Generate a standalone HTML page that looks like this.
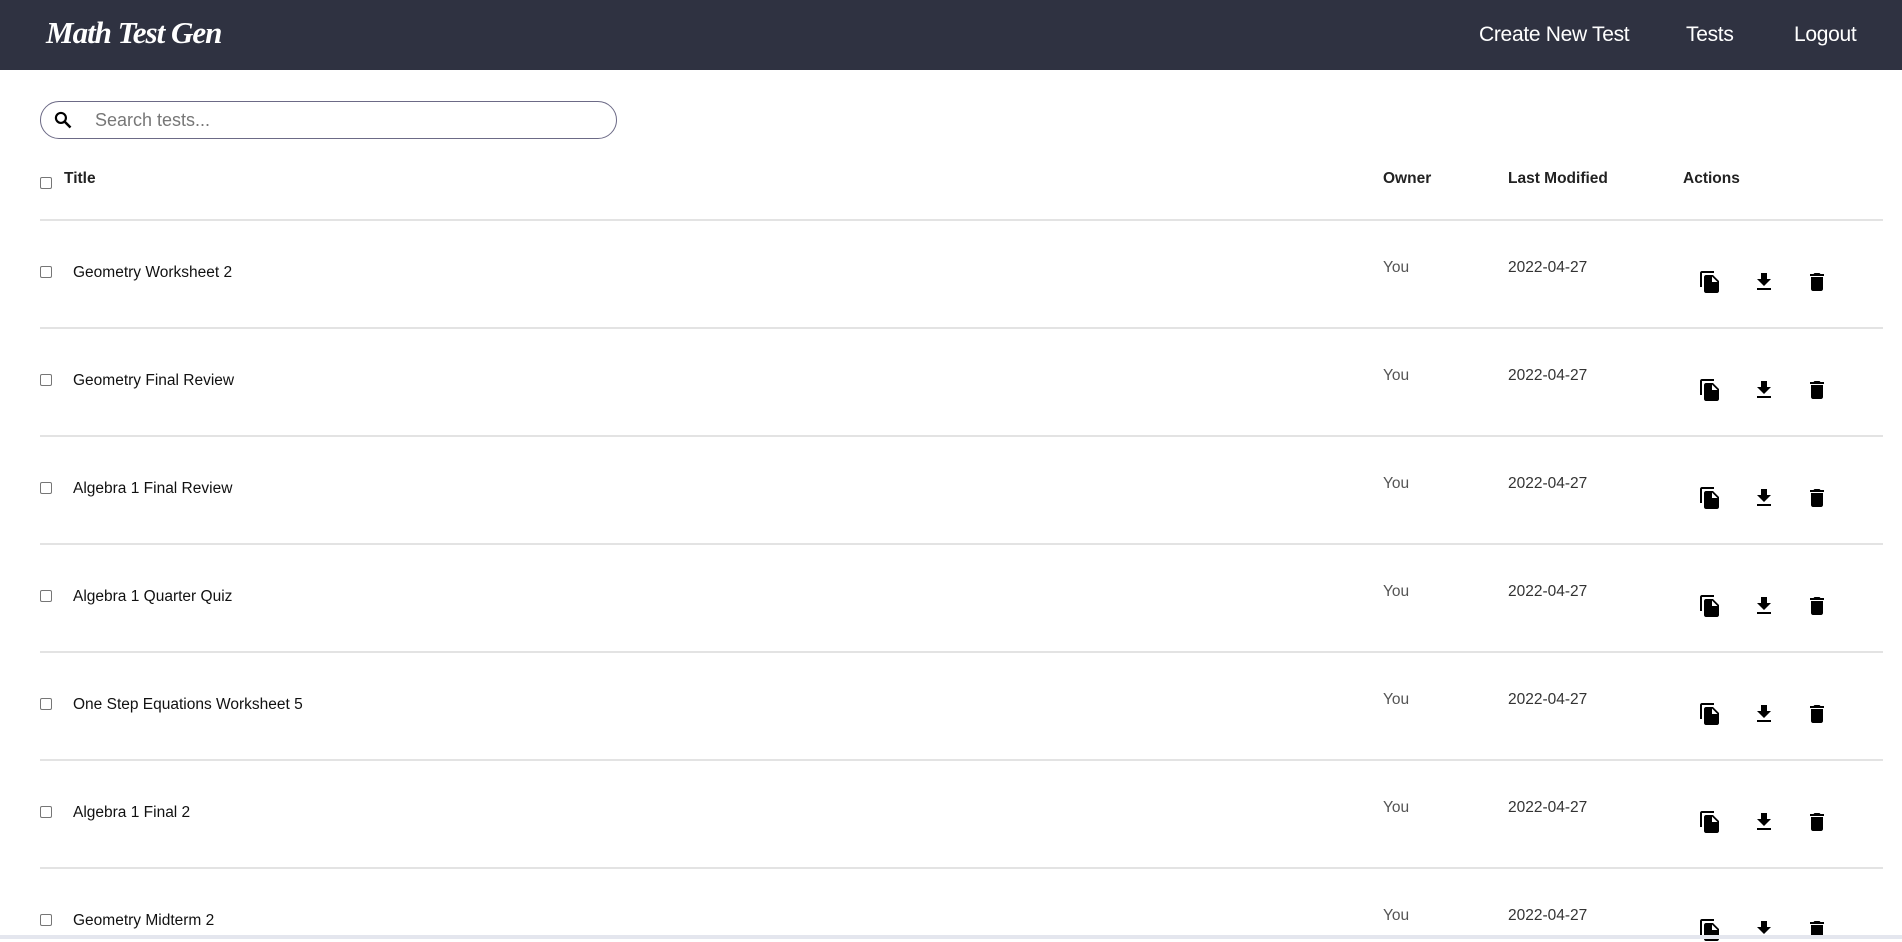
<!DOCTYPE html>
<html><head><meta charset="utf-8"><style>
*{margin:0;padding:0;box-sizing:border-box}
body{width:1902px;height:939px;overflow:hidden;background:#fff;font-family:"Liberation Sans",Arial,sans-serif;position:relative;color:#111}
.hdr{position:absolute;left:0;top:0;width:1902px;height:70px;background:#2f3241}
.logo{position:absolute;left:46px;top:15px;font-family:"Liberation Serif",serif;font-style:italic;font-weight:bold;font-size:31px;color:#fff;letter-spacing:-1px}
.nav{position:absolute;top:23px;color:#fff;font-size:21px;letter-spacing:-0.3px}
.search{position:absolute;left:40px;top:101px;width:577px;height:38px;border:1.3px solid #6c6a86;border-radius:19px}
.search span{position:absolute;left:54px;top:8px;font-size:18px;color:#777}
.cb{position:absolute;width:12px;height:12px;border:1px solid #767676;border-radius:2px;background:#fff}
.th{position:absolute;top:170px;font-weight:bold;font-size:15.5px;color:#222}
.line{position:absolute;left:40px;width:1843px;height:1.5px;background:#e3e3e3}
.t{position:absolute;left:73px;font-size:15.5px;color:#111}
.o{position:absolute;left:1383px;font-size:15.5px;color:#555}
.d{position:absolute;left:1508px;font-size:15.5px;color:#333}
.ic{position:absolute}
.sb{position:absolute;left:0;top:935px;width:1902px;height:4px;background:#e4e6ee}
</style></head><body>
<div class="hdr">
<div class="logo">Math Test Gen</div>
<div class="nav" style="left:1479px">Create New Test</div>
<div class="nav" style="left:1686px">Tests</div>
<div class="nav" style="left:1794px">Logout</div>
</div>
<div class="search">
<svg style="position:absolute;left:12px;top:8px" width="20" height="20" viewBox="0 0 24 24"><circle cx="9.5" cy="9.5" r="6" fill="none" stroke="#000" stroke-width="2.6"/><path d="M14 14l7 7" stroke="#000" stroke-width="3"/></svg>
<span>Search tests...</span>
</div>
<div class="cb" style="left:40px;top:177px"></div>
<div class="th" style="left:64px">Title</div>
<div class="th" style="left:1383px">Owner</div>
<div class="th" style="left:1508px">Last Modified</div>
<div class="th" style="left:1683px">Actions</div>
<div id="rows"></div>
<script>
var titles=["Geometry Worksheet 2","Geometry Final Review","Algebra 1 Final Review","Algebra 1 Quarter Quiz","One Step Equations Worksheet 5","Algebra 1 Final 2","Geometry Midterm 2"];
var h="";
for(var i=0;i<7;i++){
 var L=219+i*108, y=L+52;
 h+='<div class="line" style="top:'+L+'px"></div>';
 h+='<div class="cb" style="left:40px;top:'+(y-5)+'px"></div>';
 h+='<div class="t" style="top:'+(y-7)+'px">'+titles[i]+'</div>';
 h+='<div class="o" style="top:'+(y-12)+'px">You</div>';
 h+='<div class="d" style="top:'+(y-12)+'px">2022-04-27</div>';
 var iy=y-1;
 h+='<svg class="ic" style="left:1698px;top:'+iy+'px" width="24" height="24" viewBox="0 0 24 24"><path d="M16 1H4c-1.1 0-2 .9-2 2v14h2V3h12V1zm-1 4l6 6v10c0 1.1-.9 2-2 2H7.99C6.89 23 6 22.1 6 21l.01-14c0-1.1.89-2 1.99-2h7zm-1 7h5.5L14 6.5V12z"/></svg>';
 h+='<svg class="ic" style="left:1752px;top:'+iy+'px" width="24" height="24" viewBox="0 0 24 24"><path d="M19 9h-4V3H9v6H5l7 7 7-7zM5 18v2h14v-2H5z"/></svg>';
 h+='<svg class="ic" style="left:1805px;top:'+iy+'px" width="24" height="24" viewBox="0 0 24 24"><path d="M6 19c0 1.1.9 2 2 2h8c1.1 0 2-.9 2-2V7H6v12zM19 4h-3.5l-1-1h-5l-1 1H5v2h14V4z"/></svg>';
}
document.getElementById("rows").innerHTML=h;
</script>
<div class="sb"></div>
</body></html>
